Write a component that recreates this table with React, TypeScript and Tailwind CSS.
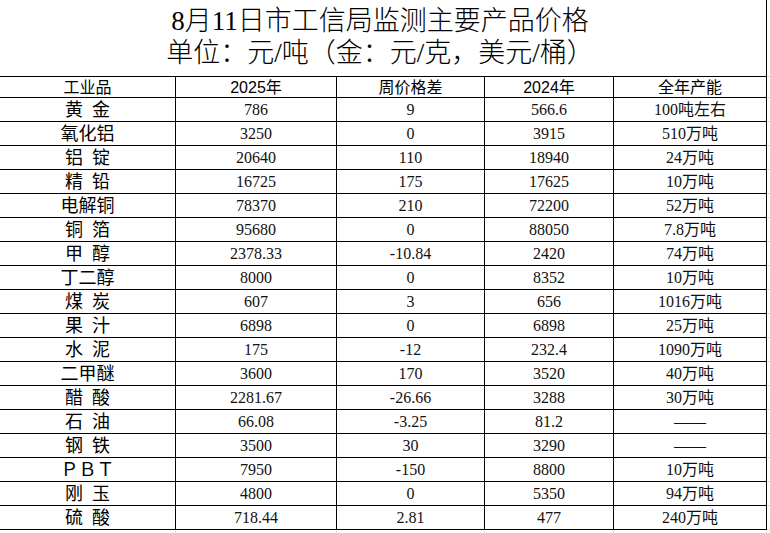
const ROWS: [string, string, string, string, string][] = [
  ["黄金", "786", "9", "566.6", "100吨左右"],
  ["氧化铝", "3250", "0", "3915", "510万吨"],
  ["铝锭", "20640", "110", "18940", "24万吨"],
  ["精铅", "16725", "175", "17625", "10万吨"],
  ["电解铜", "78370", "210", "72200", "52万吨"],
  ["铜箔", "95680", "0", "88050", "7.8万吨"],
  ["甲醇", "2378.33", "-10.84", "2420", "74万吨"],
  ["丁二醇", "8000", "0", "8352", "10万吨"],
  ["煤炭", "607", "3", "656", "1016万吨"],
  ["果汁", "6898", "0", "6898", "25万吨"],
  ["水泥", "175", "-12", "232.4", "1090万吨"],
  ["二甲醚", "3600", "170", "3520", "40万吨"],
  ["醋酸", "2281.67", "-26.66", "3288", "30万吨"],
  ["石油", "66.08", "-3.25", "81.2", "——"],
  ["钢铁", "3500", "30", "3290", "——"],
  ["ＰＢＴ", "7950", "-150", "8800", "10万吨"],
  ["刚玉", "4800", "0", "5350", "94万吨"],
  ["硫酸", "718.44", "2.81", "477", "240万吨"],
];

const HEADERS = ["工业品", "2025年", "周价格差", "2024年", "全年产能"];

// column widths include each cell's right border; last 3px is the sheet gridline overhang
const GRID = "grid grid-cols-[176px_161px_148px_129px_153px_3px]";
const SANS = "font-['Liberation_Sans','Noto_Sans_CJK_SC',sans-serif]";
const SERIF = "font-['Liberation_Serif','Noto_Sans_CJK_SC',serif]";

function Name({ name }: { name: string }) {
  if (name.length === 2) {
    return (
      <span>
        {name[0]}
        <span className="inline-block w-[0.5em]" />
        {name[1]}
      </span>
    );
  }
  return <span>{name}</span>;
}

export default function App() {
  return (
    <div className="w-[770px] h-[533px] bg-white text-black overflow-hidden">
      <div className="flex">
        <div
          className={`w-[767px] h-[76px] border-r border-black flex flex-col items-center pt-[5px] text-[27px] leading-[32px] font-light ${SERIF}`}
        >
          <div className="pr-[6px]">8月11日市工信局监测主要产品价格</div>
          <div className="pr-[6px]">单位：元/吨（金：元/克，美元/桶）</div>
        </div>
      </div>

      <div className={`${GRID} h-[22px] text-[16px] leading-none ${SANS}`}>
        {HEADERS.map((h) => (
          <div
            key={h}
            className="border-t border-b border-r border-black flex items-center justify-center pt-[2px]"
          >
            {h}
          </div>
        ))}
        <div className="border-t border-b border-[#d9d9d9]" />
      </div>

      {ROWS.map((r) => (
        <div key={r[0]} className={`${GRID} h-[24px]`}>
          <div
            className={`border-b border-r border-black flex items-center justify-center text-[18px] leading-none ${SANS}`}
          >
            <Name name={r[0]} />
          </div>
          {r.slice(1).map((v, j) => (
            <div
              key={j}
              className={`border-b border-r border-black flex items-center justify-center text-[16px] leading-none text-[#111] ${SERIF}`}
            >
              {v}
            </div>
          ))}
          <div className="border-b border-[#d9d9d9]" />
        </div>
      ))}

      <div className={`${GRID} h-[4px]`}>
        {[0, 1, 2, 3, 4].map((k) => (
          <div key={k} className="border-r border-[#e0e0e0]" />
        ))}
        <div />
      </div>
    </div>
  );
}
